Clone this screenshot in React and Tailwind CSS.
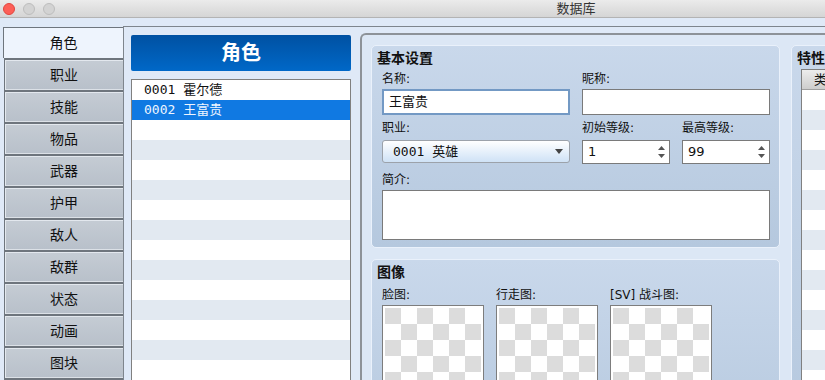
import React from 'react';

const tabs = ['职业', '技能', '物品', '武器', '护甲', '敌人', '敌群', '状态', '动画', '图块', ''];

const actors = [
    { id: '0001', name: '霍尔德' },
    { id: '0002', name: '王富贵' },
];

const UI_FONT = "font-['DejaVu_Sans','Noto_Sans_CJK_SC',sans-serif]";

const Checker = () => (
    <div className="w-[102px] h-[102px] shrink-0 border border-[#7d7d7d] bg-white p-[2px]">
        <div className="w-[96px] h-[96px] bg-[conic-gradient(white_25%,#dcdcdc_0_50%,white_0_75%,#dcdcdc_0)] bg-[length:32px_32px]" />
    </div>
);

const Spinner = ({ value }) => (
    <div className="w-[88px] h-[24px] border border-[#7a7a7a] bg-white flex items-center justify-between pl-[5px] pr-[4px]">
        <span className="text-[13px] text-[#111]">{value}</span>
        <svg width="7" height="14" viewBox="0 0 7 14">
            <path d="M0 5 L3.5 1 L7 5 Z" fill="#555" />
            <path d="M0 9 L3.5 13 L7 9 Z" fill="#555" />
        </svg>
    </div>
);

const App = () => {
    const rows = Array.from({ length: 16 });
    const traitRows = Array.from({ length: 16 });

    return (
        <div className={`w-[825px] h-[380px] overflow-hidden bg-[#dfe9f7] text-[#111] ${UI_FONT}`}>
            {/* title bar */}
            <div className="h-[18px] flex items-center bg-linear-to-b from-[#ebebeb] to-[#d5d5d5] border-b border-[#b3b3b3]">
                <div className="w-[56px] shrink-0 flex items-center gap-[8px] pl-[3px]">
                    <div className="w-[12px] h-[12px] rounded-full bg-[#fd5f57] border border-[#e1463f]" />
                    <div className="w-[12px] h-[12px] rounded-full bg-[#d3d3d3] border border-[#bdbdbd]" />
                    <div className="w-[12px] h-[12px] rounded-full bg-[#d3d3d3] border border-[#bdbdbd]" />
                </div>
                <div className="flex-1 text-center pl-[271px] text-[13px] leading-[17px] text-[#333]">数据库</div>
            </div>

            <div className="flex pt-[8px]">
                {/* tabs */}
                <div className="w-[123px] shrink-0 flex flex-col pt-[1px]">
                    <div className="ml-[3px] h-[31px] border-l border-t border-[#6e757d] bg-[#eef4fd] flex items-center justify-center text-[14px]">
                        角色
                    </div>
                    {tabs.map((t, i) => (
                        <div
                            key={i}
                            className="ml-[4px] h-[32px] shrink-0 border-t-2 border-l border-[#6e757d] bg-linear-to-b from-[#c5ccd4] to-[#b8c0ca] shadow-[inset_1px_1px_0_#e3e8ee,inset_0_-1px_0_#dce1e7] flex items-center justify-center text-[14px]"
                        >
                            {t}
                        </div>
                    ))}
                </div>

                {/* pane */}
                <div className="flex-1 flex border-l border-t border-[#7e858d] pl-[7px] pt-[6px]">
                    {/* actor list */}
                    <div className="w-[220px] shrink-0 flex flex-col pt-[2px]">
                        <div className="h-[36px] rounded-[2px] bg-linear-to-b from-[#0051a2] to-[#0068c8] flex items-center justify-center text-white text-[20px] font-bold">
                            角色
                        </div>
                        <div className="mt-[8px] border border-[#808080] bg-white">
                            {rows.map((_, i) => {
                                const a = actors[i];
                                const selected = i === 1;
                                const bg = selected ? 'bg-[#1079e2] text-[#eef5ff]' : i % 2 === 1 ? 'bg-[#e2e9f1]' : 'bg-white';
                                return (
                                    <div key={i} className={`h-[20px] pl-[12px] flex items-center text-[13px] font-['DejaVu_Sans_Mono','Noto_Sans_CJK_SC',monospace] ${bg}`}>
                                        {a ? `${a.id} ${a.name}` : ''}
                                    </div>
                                );
                            })}
                        </div>
                    </div>

                    {/* group frame */}
                    <div className="ml-[9px] w-[760px] shrink-0 border-l-2 border-t-2 border-[#8d9298] rounded-tl-[6px] bg-[#dce7f5] pl-[9px] pt-[10px] flex gap-[11px]">
                        <div className="w-[409px] shrink-0 flex flex-col gap-[11px]">
                            {/* basic settings */}
                            <div className="h-[203px] rounded-[5px] border border-[#eaf1fb] bg-linear-to-b from-[#c9d8eb] to-[#b5c8de] pt-[4px]">
                                <div className="pl-[5px] h-[17px] leading-[17px] text-[14px] font-bold">基本设置</div>
                                <div className="pl-[10px] pr-[9px]">
                                    <div className="flex gap-[12px] mt-[4px] h-[16px] leading-[16px] text-[12px]">
                                        <div className="w-[188px]">名称:</div>
                                        <div className="w-[188px]">昵称:</div>
                                    </div>
                                    <div className="flex gap-[12px] mt-[2px]">
                                        <div className="w-[188px] h-[26px] border-2 border-[#7399c4] bg-white flex items-center pl-[5px] text-[13px]">王富贵</div>
                                        <div className="w-[188px] h-[26px] border border-[#7a7a7a] bg-white" />
                                    </div>
                                    <div className="flex gap-[12px] mt-[5px] h-[16px] leading-[16px] text-[12px]">
                                        <div className="w-[188px]">职业:</div>
                                        <div className="w-[88px]">初始等级:</div>
                                        <div className="w-[88px]">最高等级:</div>
                                    </div>
                                    <div className="flex gap-[12px] mt-[4px]">
                                        <div className="w-[188px] h-[23px] rounded-[3px] border border-[#9ca2aa] bg-linear-to-b from-white to-[#cfe2f6] flex items-center justify-between pl-[10px] pr-[6px]">
                                            <span className="text-[13px] font-['DejaVu_Sans_Mono','Noto_Sans_CJK_SC',monospace]">0001 英雄</span>
                                            <svg width="8" height="5" viewBox="0 0 8 5">
                                                <path d="M0 0 L8 0 L4 5 Z" fill="#444" />
                                            </svg>
                                        </div>
                                        <Spinner value="1" />
                                        <Spinner value="99" />
                                    </div>
                                    <div className="mt-[8px] h-[16px] leading-[16px] text-[12px]">简介:</div>
                                    <div className="mt-[2px] h-[50px] border border-[#7a7a7a] bg-white" />
                                </div>
                            </div>

                            {/* images */}
                            <div className="h-[200px] rounded-[5px] border border-[#eaf1fb] bg-linear-to-b from-[#c9d8eb] to-[#b5c8de] pt-[4px]">
                                <div className="pl-[5px] h-[17px] leading-[17px] text-[14px] font-bold">图像</div>
                                <div className="pl-[10px] flex gap-[12px]">
                                    {['脸图:', '行走图:', '[SV] 战斗图:'].map((l) => (
                                        <div key={l} className="w-[102px] shrink-0">
                                            <div className="mt-[6px] h-[16px] leading-[16px] text-[12px] whitespace-nowrap">{l}</div>
                                            <div className="mt-[2px]">
                                                <Checker />
                                            </div>
                                        </div>
                                    ))}
                                </div>
                            </div>
                        </div>

                        {/* traits */}
                        <div className="w-[300px] shrink-0 h-[400px] rounded-[5px] border border-[#eaf1fb] bg-linear-to-b from-[#c9d8eb] to-[#b5c8de] pt-[4px]">
                            <div className="pl-[5px] h-[17px] leading-[17px] text-[14px] font-bold">特性</div>
                            <div className="ml-[9px] mt-[2px] border border-[#808080] bg-white">
                                <div className="h-[20px] bg-linear-to-b from-[#ededed] to-[#cdcdcd] border-b border-[#a0a0a0] pl-[12px] flex items-center text-[13px]">类型</div>
                                {traitRows.map((_, i) => (
                                    <div key={i} className={`h-[20px] ${i % 2 === 1 ? 'bg-[#e2e9f1]' : 'bg-white'}`} />
                                ))}
                            </div>
                        </div>
                    </div>
                </div>
            </div>
        </div>
    );
};

export default App;
